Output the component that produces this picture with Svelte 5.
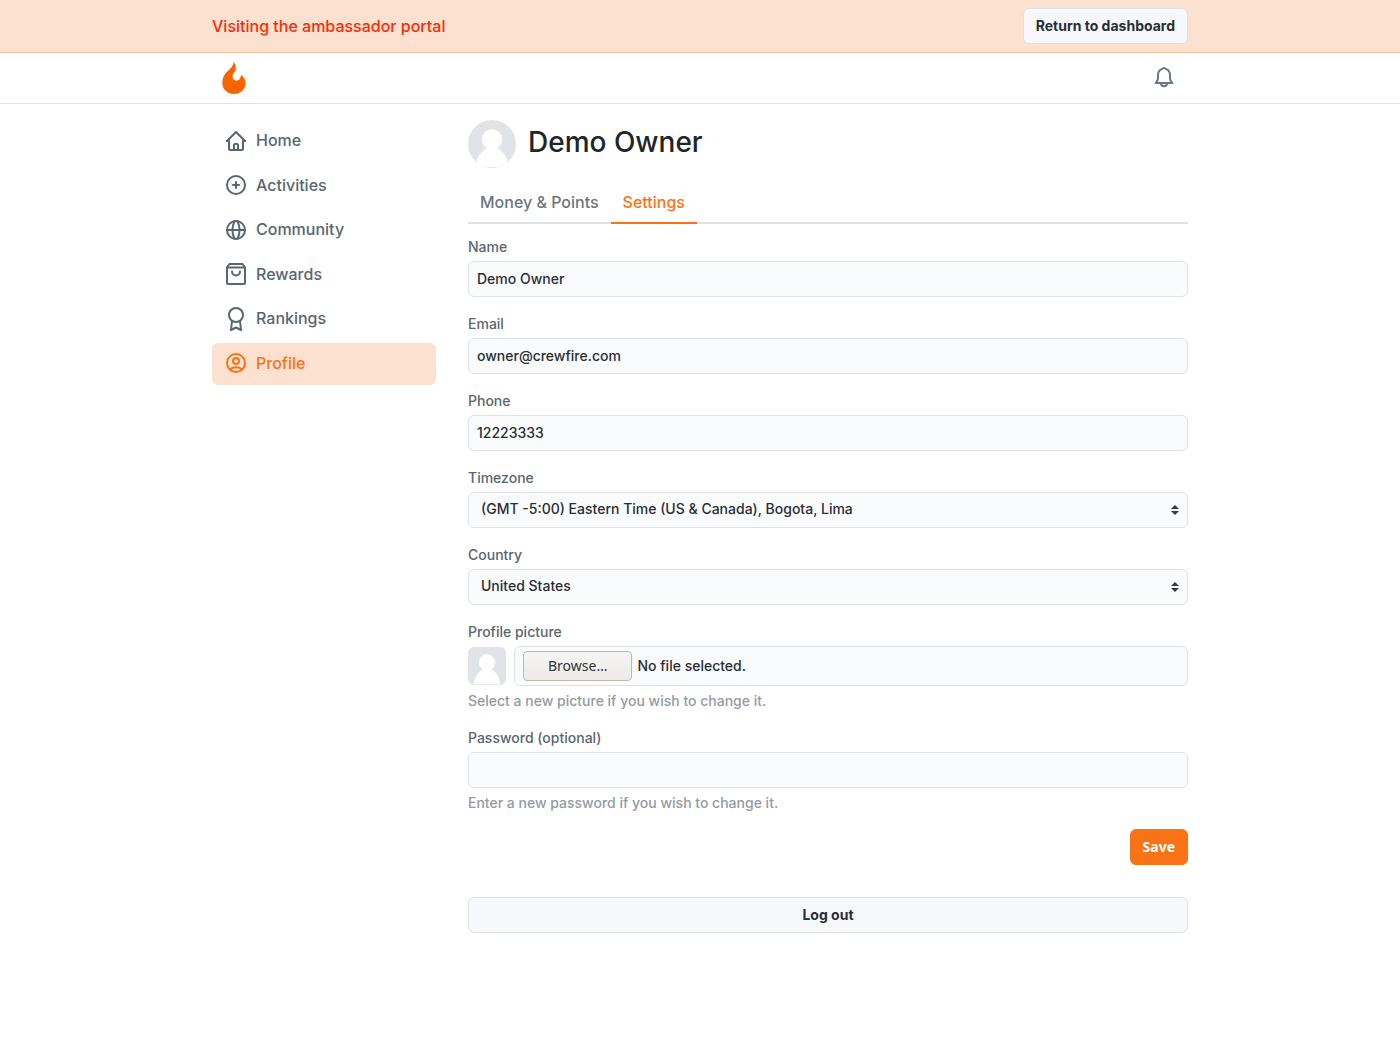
<script>
  const nav = [
    {
      label: 'Home',
      paths: [
        'M3 12L12 3l9 9',
        'M3 12h2v8a1 1 0 0 0 1 1h12a1 1 0 0 0 1-1v-8h2',
        'M10 21v-5a1 1 0 0 1 1-1h2a1 1 0 0 1 1 1v5'
      ]
    },
    {
      label: 'Activities',
      paths: ['M12 3a9 9 0 1 0 0 18a9 9 0 1 0 0-18z', 'M12 9v6M9 12h6']
    },
    {
      label: 'Community',
      paths: [
        'M12 3a9 9 0 1 0 0 18a9 9 0 1 0 0-18z',
        'M3 12h18',
        'M10.5 3.2C8 8.5 8 15.5 10.5 20.8M13.5 3.2C16 8.5 16 15.5 13.5 20.8'
      ]
    },
    {
      label: 'Rewards',
      paths: [
        'M3 5.5v15.5a1 1 0 0 0 1 1h16a1 1 0 0 0 1-1V5.5l-2-3a1 1 0 0 0-.8-.5H5.8a1 1 0 0 0-.8.5z',
        'M3 5.5h18',
        'M8 9.5a4 4 0 0 0 8 0'
      ]
    },
    {
      label: 'Rankings',
      paths: [
        'M12 1a7 7 0 1 0 0 14a7 7 0 1 0 0-14z',
        'M8 14L7 23l5-2.5L17 23l-1-9'
      ]
    },
    {
      label: 'Profile',
      active: true,
      paths: [
        'M12 3a9 9 0 1 0 0 18a9 9 0 1 0 0-18z',
        'M12 7a3 3 0 1 0 0 6a3 3 0 1 0 0-6z',
        'M6 18.5C7.5 17 9.5 16.3 12 16.3s4.5.7 6 2.2'
      ]
    }
  ];

  let name = $state('Demo Owner');
  let email = $state('owner@crewfire.com');
  let phone = $state('12223333');
  let password = $state('');
  let fileName = $state('No file selected.');

  function pickFile(event) {
    fileName = event.currentTarget.files[0]?.name ?? 'No file selected.';
  }
</script>

{#snippet avatar()}
  <svg class="person" viewBox="0 0 48 48" aria-hidden="true">
    <rect width="48" height="48" fill="#e0e3e8" />
    <circle cx="24" cy="19.5" r="10.2" fill="#fff" />
    <path d="M7.5 47C8 38.5 12 32.5 18 28.5h12C36 32.5 40 38.5 40.5 47z" fill="#fff" />
  </svg>
{/snippet}

{#snippet arrows()}
  <svg class="arrows" viewBox="0 0 8 10" aria-hidden="true">
    <path d="M4 0L8 4H0zM0 6h8L4 10z" fill="#343a40" />
  </svg>
{/snippet}

<div class="banner">
  <div class="container bar">
    <span>Visiting the ambassador portal</span>
    <button type="button" class="button">Return to dashboard</button>
  </div>
</div>

<header>
  <div class="container bar header-bar">
    <a class="logo" href="#home" aria-label="CrewFire">
      <svg width="24" height="32" viewBox="0 0 24 32" aria-hidden="true">
        <path
          fill="#fa6400"
          d="M11.6 0C13.2 2 13.9 4.3 13.8 7c-.1 2.500-3.200 4.500-3.200 7.600 0 2.500 1.400 4.100 3.400 4.100 3.200 0 4.700-2 5-5.900 3 2.300 4.500 5 4.500 8.500C23.500 27.500 18.500 32 12 32S.3 27.500.3 20.800C.3 16 2.100 12.500 5.300 9.500 8.800 6.300 11.300 4 11.600 0z"
        />
      </svg>
    </a>
    <button type="button" class="bell" aria-label="Notifications">
      <svg class="icon" viewBox="0 0 24 24" aria-hidden="true">
        <path d="M12 3c-1 0-1.200.7-2.200 1.100C7.300 5.100 6 7.300 6 10v3.500c0 1.700-.8 2.800-2 4L3.700 18h16.600l-.3-.5c-1.200-1.200-2-2.300-2-4V10c0-2.700-1.300-4.900-3.800-5.900C13.200 3.700 13 3 12 3z" />
        <path d="M9 18c0 2.300 1.300 3.300 3 3.300s3-1 3-3.300" />
      </svg>
    </button>
  </div>
</header>

<div class="container layout">
  <nav>
    {#each nav as item}
      <a href={'#' + item.label.toLowerCase()} class:active={item.active}>
        <svg class="icon" viewBox="0 0 24 24" aria-hidden="true">
          {#each item.paths as d}
            <path {d} />
          {/each}
        </svg>
        <span>{item.label}</span>
      </a>
    {/each}
  </nav>

  <main>
    <div class="profile">
      <div class="avatar">{@render avatar()}</div>
      <h1>Demo Owner</h1>
    </div>

    <div class="tabs">
      <a href="#money">Money &amp; Points</a>
      <a href="#settings" class="active">Settings</a>
    </div>

    <form onsubmit={(e) => e.preventDefault()}>
      <div class="field">
        <label for="name">Name</label>
        <input id="name" type="text" bind:value={name} />
      </div>
      <div class="field">
        <label for="email">Email</label>
        <input id="email" type="email" bind:value={email} />
      </div>
      <div class="field">
        <label for="phone">Phone</label>
        <input id="phone" type="tel" bind:value={phone} />
      </div>
      <div class="field">
        <label for="timezone">Timezone</label>
        <div class="select">
          <select id="timezone">
            <option>(GMT -5:00) Eastern Time (US &amp; Canada), Bogota, Lima</option>
          </select>
          {@render arrows()}
        </div>
      </div>
      <div class="field">
        <label for="country">Country</label>
        <div class="select">
          <select id="country">
            <option>United States</option>
          </select>
          {@render arrows()}
        </div>
      </div>
      <div class="field">
        <label for="picture">Profile picture</label>
        <div class="picture">
          <div class="thumb">{@render avatar()}</div>
          <div class="file">
            <span class="browse">Browse…</span>
            <span class="file-name">{fileName}</span>
            <input id="picture" type="file" onchange={pickFile} />
          </div>
        </div>
        <p>Select a new picture if you wish to change it.</p>
      </div>
      <div class="field">
        <label for="password">Password (optional)</label>
        <input id="password" type="password" bind:value={password} />
        <p>Enter a new password if you wish to change it.</p>
      </div>
      <button type="submit" class="save">Save</button>
    </form>

    <button type="button" class="button logout">Log out</button>
  </main>
</div>

<style>
  :global(body) {
    background: #fff;
    color: #212529;
    font: 500 14px/21px Inter, sans-serif;
  }

  .container {
    box-sizing: border-box;
    max-width: 1000px;
    margin: 0 auto;
    padding: 0 12px;
  }

  .bar {
    display: flex;
    align-items: center;
    justify-content: space-between;
    height: 52px;
  }

  .banner {
    background: #fde1d0;
    border-bottom: 1px solid #fcc29b;
    color: #f82d07;
    font-size: 16px;
  }

  button {
    font: inherit;
    cursor: pointer;
  }

  .button {
    box-sizing: border-box;
    height: 36px;
    padding: 0 12px 2px;
    border: 1px solid #dee2e6;
    border-radius: 6px;
    background: #f7f8fb;
    color: #292e33;
    font-size: 14px;
    font-weight: 700;
  }

  header {
    border-bottom: 1px solid #dee2e6;
  }

  .header-bar {
    height: 50px;
  }

  .logo {
    display: flex;
    padding: 0 10px;
  }

  .bell {
    display: flex;
    padding: 0 12px 2px;
    border: 0;
    background: none;
    color: #6c7785;
  }

  .icon {
    width: 24px;
    height: 24px;
    overflow: visible;
    fill: none;
    stroke: currentColor;
    stroke-width: 2;
    stroke-linecap: round;
    stroke-linejoin: round;
  }

  .layout {
    display: grid;
    grid-template-columns: 224px minmax(0, 1fr);
    gap: 32px;
    align-items: start;
    padding-top: 16px;
    padding-bottom: 32px;
  }

  nav {
    display: flex;
    flex-direction: column;
    justify-content: space-between;
    min-height: 265px;
  }

  nav a {
    box-sizing: border-box;
    display: flex;
    align-items: center;
    gap: 8px;
    height: 42px;
    padding: 0 12px 1px;
    border-radius: 6px;
    color: #596570;
    font-size: 16px;
    text-decoration: none;
  }

  nav a.active {
    background: #fde1d0;
    color: #f97316;
  }

  .profile {
    display: flex;
    align-items: center;
    gap: 12px;
  }

  .person {
    display: block;
    width: 100%;
  }

  .avatar {
    width: 48px;
    height: 48px;
    overflow: hidden;
    border-radius: 50%;
  }

  h1 {
    margin: 0;
    padding-bottom: 4px;
    font-size: 28px;
    font-weight: 500;
    line-height: 36px;
  }

  .tabs {
    display: flex;
    margin-top: 12px;
    border-bottom: 2px solid #dee2e6;
    font-size: 16px;
    line-height: 24px;
  }

  .tabs a {
    margin-bottom: -2px;
    padding: 10px 12px 8px;
    border-bottom: 2px solid transparent;
    color: #6c757d;
    text-decoration: none;
  }

  .tabs a.active {
    border-color: #f97316;
    color: #f97316;
  }

  form {
    display: flex;
    flex-direction: column;
    gap: 16px;
    padding-top: 12px;
  }

  .field {
    display: flex;
    flex-direction: column;
    gap: 4px;
  }

  label {
    color: #596570;
  }

  .field > input,
  select,
  .file {
    box-sizing: border-box;
    width: 100%;
    height: 36px;
    padding: 0 8px;
    border: 1px solid #dee2e6;
    border-radius: 6px;
    background: #fafbfd;
    color: #292e33;
    font: inherit;
  }

  .field > input {
    padding-bottom: 2px;
  }

  .select {
    display: grid;
    align-items: center;
  }

  .select > :global(*) {
    grid-area: 1 / 1;
  }

  select {
    appearance: none;
    padding: 0 24px 4px 12px;
  }

  .arrows {
    width: 8px;
    height: 10px;
    margin-right: 9px;
    justify-self: end;
    pointer-events: none;
  }

  .picture {
    display: flex;
    align-items: center;
    gap: 8px;
  }

  .thumb {
    flex: none;
    width: 38px;
    height: 38px;
    overflow: hidden;
    border-radius: 6px;
  }

  .file {
    position: relative;
    display: flex;
    align-items: center;
    gap: 5px;
    height: 40px;
  }

  .file input {
    position: absolute;
    inset: 0;
    width: 100%;
    opacity: 0;
    cursor: pointer;
  }

  .browse {
    padding: 4px 24px;
    border: 1px solid #bfb8b1;
    border-radius: 4px;
    background: linear-gradient(#f6f5f4, #edebe9);
    color: #2e3436;
    font-family: 'Noto Sans', sans-serif;
    font-weight: 400;
    line-height: 20px;
  }

  .file-name {
    padding-bottom: 2px;
  }

  p {
    margin: 0;
    color: #939ba3;
  }

  .save {
    align-self: flex-end;
    height: 36px;
    padding: 0 12px 2px;
    border: 1px solid #f97316;
    border-radius: 6px;
    background: #f97316;
    color: #fff;
    font-family: 'Noto Sans', sans-serif;
    font-weight: 700;
  }

  .logout {
    width: 100%;
    margin-top: 32px;
  }
</style>
